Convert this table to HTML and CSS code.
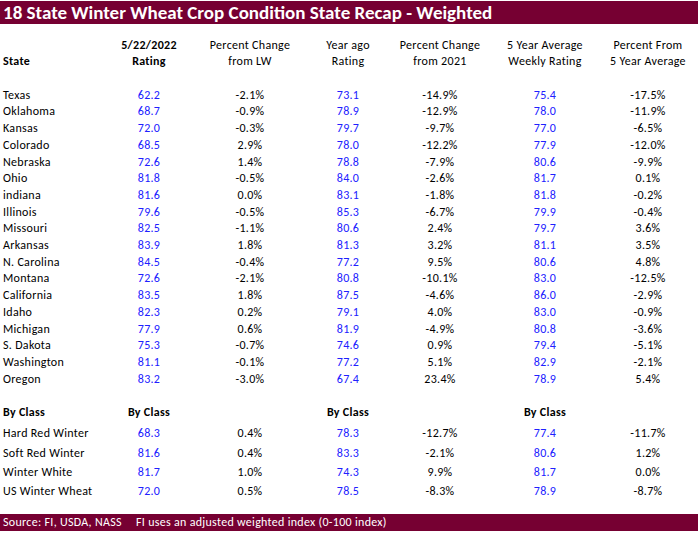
FILE: index.html
```html
<!DOCTYPE html>
<html>
<head>
<meta charset="utf-8">
<link rel="stylesheet" href="styles.css">
</head>
<body>
<div class="sheet">
  <div class="title">18 State Winter Wheat Crop Condition State Recap - Weighted</div>
  <table class="recap">
    <colgroup>
      <col class="c-state"><col class="c-rate"><col class="c-lw"><col class="c-ya"><col class="c-y21"><col class="c-avg"><col class="c-p5">
    </colgroup>
    <thead>
      <tr class="hrow">
        <th></th><th class="bold">5/22/2022</th><th>Percent Change</th><th>Year ago</th><th>Percent Change</th><th>5 Year Average</th><th>Percent From</th>
      </tr>
      <tr class="hrow">
        <th class="name bold">State</th><th class="bold">Rating</th><th>from LW</th><th>Rating</th><th>from 2021</th><th>Weekly Rating</th><th>5 Year Average</th>
      </tr>
    </thead>
    <tbody class="states">
      <tr class="gap"><td colspan="7"></td></tr>
      <tr><td class="name">Texas</td><td class="num">62.2</td><td>-2.1%</td><td class="num">73.1</td><td>-14.9%</td><td class="num">75.4</td><td>-17.5%</td></tr>
      <tr><td class="name">Oklahoma</td><td class="num">68.7</td><td>-0.9%</td><td class="num">78.9</td><td>-12.9%</td><td class="num">78.0</td><td>-11.9%</td></tr>
      <tr><td class="name">Kansas</td><td class="num">72.0</td><td>-0.3%</td><td class="num">79.7</td><td>-9.7%</td><td class="num">77.0</td><td>-6.5%</td></tr>
      <tr><td class="name">Colorado</td><td class="num">68.5</td><td>2.9%</td><td class="num">78.0</td><td>-12.2%</td><td class="num">77.9</td><td>-12.0%</td></tr>
      <tr><td class="name">Nebraska</td><td class="num">72.6</td><td>1.4%</td><td class="num">78.8</td><td>-7.9%</td><td class="num">80.6</td><td>-9.9%</td></tr>
      <tr><td class="name">Ohio</td><td class="num">81.8</td><td>-0.5%</td><td class="num">84.0</td><td>-2.6%</td><td class="num">81.7</td><td>0.1%</td></tr>
      <tr><td class="name">indiana</td><td class="num">81.6</td><td>0.0%</td><td class="num">83.1</td><td>-1.8%</td><td class="num">81.8</td><td>-0.2%</td></tr>
      <tr><td class="name">Illinois</td><td class="num">79.6</td><td>-0.5%</td><td class="num">85.3</td><td>-6.7%</td><td class="num">79.9</td><td>-0.4%</td></tr>
      <tr><td class="name">Missouri</td><td class="num">82.5</td><td>-1.1%</td><td class="num">80.6</td><td>2.4%</td><td class="num">79.7</td><td>3.6%</td></tr>
      <tr><td class="name">Arkansas</td><td class="num">83.9</td><td>1.8%</td><td class="num">81.3</td><td>3.2%</td><td class="num">81.1</td><td>3.5%</td></tr>
      <tr><td class="name">N. Carolina</td><td class="num">84.5</td><td>-0.4%</td><td class="num">77.2</td><td>9.5%</td><td class="num">80.6</td><td>4.8%</td></tr>
      <tr><td class="name">Montana</td><td class="num">72.6</td><td>-2.1%</td><td class="num">80.8</td><td>-10.1%</td><td class="num">83.0</td><td>-12.5%</td></tr>
      <tr><td class="name">California</td><td class="num">83.5</td><td>1.8%</td><td class="num">87.5</td><td>-4.6%</td><td class="num">86.0</td><td>-2.9%</td></tr>
      <tr><td class="name">Idaho</td><td class="num">82.3</td><td>0.2%</td><td class="num">79.1</td><td>4.0%</td><td class="num">83.0</td><td>-0.9%</td></tr>
      <tr><td class="name">Michigan</td><td class="num">77.9</td><td>0.6%</td><td class="num">81.9</td><td>-4.9%</td><td class="num">80.8</td><td>-3.6%</td></tr>
      <tr><td class="name">S. Dakota</td><td class="num">75.3</td><td>-0.7%</td><td class="num">74.6</td><td>0.9%</td><td class="num">79.4</td><td>-5.1%</td></tr>
      <tr><td class="name">Washington</td><td class="num">81.1</td><td>-0.1%</td><td class="num">77.2</td><td>5.1%</td><td class="num">82.9</td><td>-2.1%</td></tr>
      <tr><td class="name">Oregon</td><td class="num">83.2</td><td>-3.0%</td><td class="num">67.4</td><td>23.4%</td><td class="num">78.9</td><td>5.4%</td></tr>
      <tr class="gap"><td colspan="7"></td></tr>
    </tbody>
    <tbody class="classes">
      <tr class="classhead"><td class="name bold">By Class</td><td class="bold">By Class</td><td></td><td class="bold">By Class</td><td></td><td class="bold">By Class</td><td></td></tr>
      <tr class="cls r20"><td class="name">Hard Red Winter</td><td class="num">68.3</td><td>0.4%</td><td class="num">78.3</td><td>-12.7%</td><td class="num">77.4</td><td>-11.7%</td></tr>
      <tr class="cls r20"><td class="name">Soft Red Winter</td><td class="num">81.6</td><td>0.4%</td><td class="num">83.3</td><td>-2.1%</td><td class="num">80.6</td><td>1.2%</td></tr>
      <tr class="cls r19"><td class="name">Winter White</td><td class="num">81.7</td><td>1.0%</td><td class="num">74.3</td><td>9.9%</td><td class="num">81.7</td><td>0.0%</td></tr>
      <tr class="cls r18"><td class="name">US Winter Wheat</td><td class="num">72.0</td><td>0.5%</td><td class="num">78.5</td><td>-8.3%</td><td class="num">78.9</td><td>-8.7%</td></tr>
    </tbody>
  </table>
  <div class="footer"><span class="src">Source: FI, USDA, NASS</span><span>FI uses an adjusted weighted index (0-100 index)</span></div>
</div>
</body>
</html>
```

FILE: styles.css
```css
html, body {
  margin: 0;
  padding: 0;
  background: #ffffff;
}

body {
  font-family: "Carlito", "Lato", "Liberation Sans", sans-serif;
  font-size: 12px;
  color: #000000;
}

.sheet {
  width: 698px;
  padding-top: 1px;
}

.title {
  height: 23px;
  line-height: 23px;
  background: #760032;
  color: #ffffff;
  font-weight: bold;
  font-size: 19px;
  padding-left: 3px;
  white-space: nowrap;
}

.recap {
  margin-top: 12.6px;
  width: 692px;
  table-layout: fixed;
  border-collapse: collapse;
  border-spacing: 0;
  letter-spacing: 0.3px;
}

.c-state { width: 100px; }
.c-rate { width: 98px; }
.c-lw { width: 104px; }
.c-ya { width: 92px; }
.c-y21 { width: 92px; }
.c-avg { width: 118px; }
.c-p5 { width: 88px; }

.recap th,
.recap td {
  padding: 0;
  font-weight: normal;
  text-align: center;
  line-height: 16.7px;
  height: 16.7px;
  white-space: nowrap;
  vertical-align: middle;
}

.recap .name {
  text-align: left;
  padding-left: 3px;
}

.recap .bold {
  font-weight: bold;
}

.recap .num {
  color: #2020ff;
}

.classhead td {
  padding-bottom: 2.4px;
}

.cls.r20 td { height: 20px; line-height: 20px; }
.cls.r19 td { height: 19px; line-height: 19px; }
.cls.r18 td { height: 18px; line-height: 18px; }

.footer {
  margin-top: 14px;
  height: 17px;
  line-height: 17px;
  background: #760032;
  color: #ffffff;
  padding-left: 3px;
  white-space: nowrap;
  display: flex;
  letter-spacing: 0.3px;
}

.footer .src {
  width: 133px;
}
```
